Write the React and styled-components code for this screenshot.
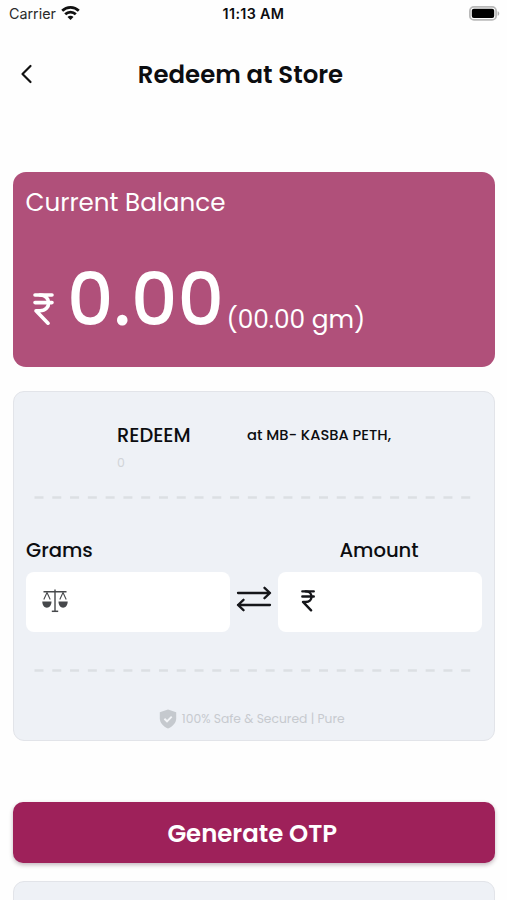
import React from "react"
import styled, {createGlobalStyle} from "styled-components"

const GlobalStyle = createGlobalStyle`
*{
    box-sizing: border-box;
}

body{
    margin: 0;
    background: #fefefe;
    color: #0c0d10;
    font-family: Poppins, Inter, "Noto Sans", sans-serif;
    -webkit-font-smoothing: antialiased;
}
`

const Screen = styled.div`
width: 507px;
height: 900px;
overflow: hidden;
`

const StatusBar = styled.header`
display: grid;
grid-template-columns: 1fr auto 1fr;
align-items: center;
height: 28px;
padding: 0 7px 0 9px;
font-family: Inter, sans-serif;
font-size: 14.3px;
line-height: 28px;
`

const Carrier = styled.div`
display: flex;
align-items: center;
gap: 5.5px;
color: #2a2a2a;

svg{
    margin-top: -3px;
}
`

const Clock = styled.span`
margin-left: -2px;
font-weight: 600;
font-size: 14.3px;
letter-spacing: 0.35px;
`

const Battery = styled.svg`
justify-self: end;
margin-top: -2px;
`

const TitleBar = styled.div`
display: grid;
grid-template-columns: 60px 1fr 60px;
align-items: center;
height: 92px;
padding-left: 18px;

svg{
    display: block;
}
`

const Title = styled.h1`
margin: 1px 0 0 -44px;
text-align: center;
font-size: 24.4px;
font-weight: 600;
line-height: 30px;
white-space: nowrap;
`

const Content = styled.main`
padding: 52px 12.5px 0 13px;
`

const BalanceCard = styled.section`
height: 195px;
padding: 15px 12px;
border-radius: 13px;
background: #b0507a;
color: #fff;
`

const BalanceTitle = styled.div`
padding-left: 0.5px;
font-size: 24.6px;
line-height: 31px;
`

const BalanceRow = styled.div`
display: flex;
align-items: baseline;
margin-top: 38px;
padding-left: 7.5px;
line-height: 88px;
white-space: nowrap;
`

const Rupee = styled.svg`
flex: none;
`

const Whole = styled.span`
margin-left: 13.5px;
font-size: 72.5px;
font-weight: 500;
`

const Weight = styled.span`
margin-left: 2.5px;
font-size: 24.8px;
position: relative;
top: 3px;
`

const Panel = styled.section`
height: 350px;
margin-top: 24px;
padding: 27px 12px 0;
border: 1.5px solid #e2e4e9;
border-radius: 11px;
background: #eef1f6;
`

const StoreRow = styled.div`
display: grid;
grid-template-columns: 130px 1fr;
padding-left: 91px;
height: 33px;
line-height: 33px;
white-space: nowrap;
`

const RedeemLabel = styled.span`
font-size: 19.4px;
font-weight: 500;
`

const StoreName = styled.span`
font-size: 14.7px;
font-weight: 500;
`

const Points = styled.div`
padding-left: 91px;
font-size: 12.5px;
line-height: 22px;
color: #d1d4d8;
`

const Dashes = styled.svg`
display: block;
width: 437px;
height: 3px;
margin: ${props => props.$top}px 0 0 8px;
`

const LabelRow = styled.div`
display: grid;
grid-template-columns: 203px 203px;
justify-content: space-between;
margin-top: 38px;
font-size: 19.6px;
font-weight: 500;
line-height: 26px;

span:last-child{
    padding-right: 2px;
    text-align: center;
}
`

const ExchangeRow = styled.div`
display: flex;
align-items: center;
justify-content: space-between;
margin-top: 9px;

> svg{
    margin-top: -6px;
}
`

const Field = styled.div`
display: flex;
align-items: center;
width: 203.5px;
height: 59.5px;
padding: 0 0 2px ${props => props.$pad}px;
border-radius: 8px;
background: #fff;
`

const SafeNote = styled.div`
display: flex;
align-items: center;
justify-content: center;
gap: 5px;
margin: 34.5px 4px 0 0;
font-size: 12.3px;
line-height: 24px;
color: #c7cacf;
`

const OtpButton = styled.button`
display: block;
width: 100%;
height: 61px;
margin-top: 60.5px;
padding: 2px 3px 0 0;
border: 0;
border-radius: 10px;
background: #9e215a;
box-shadow: 0 2px 4px rgba(60, 20, 40, 0.3);
color: #fff;
font: inherit;
font-size: 24.4px;
font-weight: 600;
`

const NextPanel = styled(Panel)`
margin-top: 18px;
`

function WifiIcon(){
    return(
        <svg width="19" height="15" viewBox="0 0 19 15" fill="none" stroke="#111" strokeWidth="2.7">
            <path d="M1.2 5.8a11.8 11.8 0 0 1 16.6 0" />
            <path d="M4.2 9.3a7.5 7.5 0 0 1 10.6 0" />
            <path d="M9.5 15 6.5 12a4.2 4.2 0 0 1 6 0Z" fill="#111" stroke="none" />
        </svg>
    )
}

function BatteryIcon(){
    return(
        <Battery width="31" height="15" viewBox="0 0 31 15">
            <rect x="0.9" y="0.9" width="26.2" height="13" rx="4" fill="#fff" stroke="#b9b9b9" strokeWidth="1.8" />
            <rect x="2.8" y="2.8" width="22.4" height="9.2" rx="2" fill="#000" />
            <path d="M28.6 5.2c2.2.7 2.2 3.9 0 4.6Z" fill="#b0b0b0" />
        </Battery>
    )
}

function RupeeIcon({size, stroke}){
    return(
        <Rupee width={size * 21 / 32} height={size} viewBox="0 0 21 32" fill="none" stroke={stroke} strokeWidth="3.6" strokeLinecap="round" strokeLinejoin="round">
            <path d="M2 2h17M2 9.6h17" />
            <path d="M7 2c11.5 0 11.5 15.8 0 15.8H3L15 30.2" />
        </Rupee>
    )
}

function ScalesIcon(){
    return(
        <svg width="26" height="24" viewBox="0 0 26 24" fill="none" stroke="#46484b" strokeWidth="1.1">
            <path d="M13 0.5V22M1.5 2.8h23" strokeWidth="1.4" />
            <path d="M9.8 22.3h6.4" strokeWidth="1.5" />
            <path d="M1.8 10.5 5 3.5l3.2 7M17.8 10.5 21 3.5l3.2 7" />
            <path d="M0.3 12.5h9.2c0 3.7-2 6.2-4.6 6.2S0.3 16.2 0.3 12.5ZM16.5 12.5h9.2c0 3.7-2 6.2-4.6 6.2s-4.6-2.5-4.6-6.2Z" fill="#46484b" stroke="none" />
        </svg>
    )
}

function SwapIcon(){
    return(
        <svg width="36" height="26" viewBox="0 0 36 26" fill="none" stroke="#15161a" strokeWidth="2.3" strokeLinecap="round" strokeLinejoin="round">
            <path d="M2 7h32M28.5 1.8 34 7l-5.5 5.2" />
            <path d="M34 19H2M7.5 13.8 2 19l5.5 5.2" />
        </svg>
    )
}

function ShieldIcon(){
    return(
        <svg width="18" height="20" viewBox="0 0 18 20">
            <path d="M9 0.4 17.2 3.3v5.9c0 4.6-3.3 8.3-8.2 10.3C4.1 17.5 0.8 13.8 0.8 9.2V3.3Z" fill="#c5c9ce" />
            <path d="m5.4 9.8 2.6 2.5 4.7-4.7" fill="none" stroke="#f3f5f8" strokeWidth="1.9" />
        </svg>
    )
}

function DashedLine({top}){
    return(
        <Dashes $top={top} viewBox="0 0 437 3">
            <path d="M0.5 1.5H436.5" stroke="#dcdfe3" strokeWidth="2.3" strokeDasharray="9 8.78" />
        </Dashes>
    )
}

function App(){
    return(
        <Screen>
            <GlobalStyle />
            <StatusBar>
                <Carrier>Carrier <WifiIcon /></Carrier>
                <Clock>11:13 AM</Clock>
                <BatteryIcon />
            </StatusBar>

            <TitleBar>
                <svg width="16" height="22" viewBox="0 0 16 22" fill="none" stroke="#111" strokeWidth="2.2" strokeLinecap="round" strokeLinejoin="round">
                    <path d="M12.5 3 4.5 11l8 8" />
                </svg>
                <Title>Redeem at Store</Title>
            </TitleBar>

            <Content>
                <BalanceCard>
                    <BalanceTitle>Current Balance</BalanceTitle>
                    <BalanceRow>
                        <RupeeIcon size={32} stroke="#fff" />
                        <Whole>0.00</Whole>
                        <Weight>(00.00 gm)</Weight>
                    </BalanceRow>
                </BalanceCard>

                <Panel>
                    <StoreRow>
                        <RedeemLabel>REDEEM</RedeemLabel>
                        <StoreName>at MB- KASBA PETH,</StoreName>
                    </StoreRow>
                    <Points>0</Points>
                    <DashedLine top={22} />
                    <LabelRow>
                        <span>Grams</span>
                        <span>Amount</span>
                    </LabelRow>
                    <ExchangeRow>
                        <Field $pad={16}><ScalesIcon /></Field>
                        <SwapIcon />
                        <Field $pad={23}><RupeeIcon size={21.5} stroke="#15161a" /></Field>
                    </ExchangeRow>
                    <DashedLine top={37.5} />
                    <SafeNote>
                        <ShieldIcon />
                        <span>100% Safe &amp; Secured | Pure</span>
                    </SafeNote>
                </Panel>

                <OtpButton>Generate OTP</OtpButton>
                <NextPanel />
            </Content>
        </Screen>
    )
}

export default App
